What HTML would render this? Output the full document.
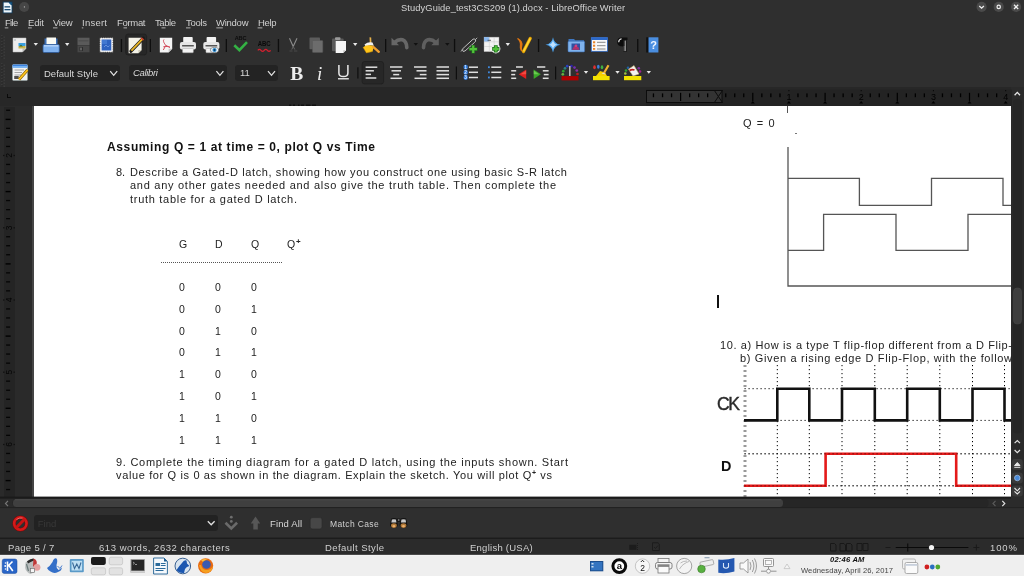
<!DOCTYPE html>
<html><head><meta charset="utf-8"><style>
html,body{margin:0;padding:0;width:1024px;height:576px;overflow:hidden;background:#2f2f2f;position:relative}
div,svg{box-sizing:border-box}
</style></head><body>
<div style="position:absolute;left:0px;top:0px;width:1024px;height:87px;background:#2f2f2f;"></div>
<div style="position:absolute;left:0px;top:87px;width:1024px;height:19px;background:#272727;"></div>
<div style="position:absolute;left:0px;top:106px;width:34px;height:392px;background:#2a2a2a;"></div>
<div style="position:absolute;left:3.5px;top:107px;width:11.5px;height:390px;background:#242424;"></div>
<div style="position:absolute;left:31.5px;top:106px;width:2.5px;height:391px;background:#444;"></div>
<div style="position:absolute;left:34px;top:106px;width:977px;height:391px;background:#ffffff;"></div>
<div style="position:absolute;left:1011px;top:87px;width:13px;height:411px;background:#2a2a2a;"></div>
<div style="position:absolute;left:0px;top:497px;width:1024px;height:11px;background:#2b2b2b;"></div>
<div style="position:absolute;left:0px;top:508px;width:1024px;height:30px;background:#2f2f2f;"></div>
<div style="position:absolute;left:0px;top:538px;width:1024px;height:17px;background:#2b2b2b;"></div>
<div style="position:absolute;left:0px;top:554px;width:1024px;height:1px;background:#202020;"></div>
<div style="position:absolute;left:0px;top:555px;width:1024px;height:21px;background:#efefef;"></div>
<div style="position:absolute;left:40px;top:65px;width:80px;height:16px;background:#232323;border-radius:3px"></div>
<div style="position:absolute;left:129px;top:65px;width:98px;height:16px;background:#232323;border-radius:3px"></div>
<div style="position:absolute;left:235px;top:65px;width:43px;height:16px;background:#232323;border-radius:3px"></div>
<div style="position:absolute;left:33.7px;top:515px;width:184.6px;height:16.4px;background:#222222;border-radius:3px"></div>
<div style="position:absolute;left:161px;top:262px;width:121px;height:0;border-top:1px dotted #555"></div>
<div style="position:absolute;left:787px;top:106px;width:1.3px;height:7px;background:#555;"></div>
<div style="position:absolute;left:795px;top:133px;width:1.5px;height:1px;background:#777;"></div>
<svg style="position:absolute;left:780px;top:140px;will-change:transform;" width="231" height="150" viewBox="0 0 231 150"><g fill="none" stroke="#555" stroke-width="1.3">
<path d="M8 7 V146 H231"/>
<path d="M8 38.3 H79.4 V65.3 H151.5 V38.3 H223 V65.3 H231"/>
<path d="M8 110.3 H43.6 V74.4 H116 V110.3 H188 V74.4 H231"/>
</g></svg>
<div style="position:absolute;left:717px;top:295px;width:2px;height:13px;background:#111;"></div>
<svg style="position:absolute;left:700px;top:365px;will-change:transform;" width="311" height="132" viewBox="0 0 311 132"><g stroke="#000" stroke-width="1" stroke-dasharray="1.2 2.8" fill="none"><path d="M77.3 0 V132"/><path d="M109.3 0 V132"/><path d="M142.0 0 V132"/><path d="M174.8 0 V132"/><path d="M207.2 0 V132"/><path d="M239.8 0 V132"/><path d="M272.5 0 V132"/><path d="M304.5 0 V132"/><path d="M44.5 23.7 H311"/><path d="M44.5 55.4 H311"/><path d="M44.5 88.8 H311"/><path d="M44.5 120.8 H311"/></g><path d="M45 0 V132" stroke="#999" stroke-width="3" stroke-dasharray="2 3" fill="none"/><path d="M44 55.4 H77.3 V23.7 H109.3 V55.4 H142.0 V23.7 H174.8 V55.4 H207.2 V23.7 H239.8 V55.4 H272.5 V23.7 H304.5 V55.4 H311" stroke="#111" stroke-width="2.6" fill="none"/><path d="M44 120.8 H125.6 V88.8 H256.2 V120.8 H311" stroke="#e41a1a" stroke-width="2.6" fill="none"/><g stroke="#000" stroke-width="1" stroke-dasharray="1.2 2.8" fill="none" opacity="0.6"><path d="M44.5 88.8 H311"/><path d="M44.5 120.8 H311"/></g></svg>
<svg style="position:absolute;left:645.6px;top:89px;will-change:transform;" width="366" height="17" viewBox="0 0 366 17"><rect x="0" y="0.6" width="366" height="16.4" fill="#232323"/><rect x="0.5" y="1.5" width="75.5" height="12" fill="#333" stroke="#0c0c0c" stroke-width="1"/><rect x="6.8" y="4.4" width="1.3" height="3.8" fill="#000"/><rect x="15.9" y="4.4" width="1.3" height="3.8" fill="#000"/><rect x="24.9" y="4.4" width="1.3" height="3.8" fill="#000"/><rect x="34.0" y="3.8" width="1.2" height="8.2" fill="#000"/><rect x="43.0" y="4.4" width="1.3" height="3.8" fill="#000"/><rect x="52.0" y="4.4" width="1.3" height="3.8" fill="#000"/><rect x="61.0" y="4.4" width="1.3" height="3.8" fill="#000"/><rect x="79.1" y="4.4" width="1.3" height="3.8" fill="#000"/><rect x="88.1" y="4.4" width="1.3" height="3.8" fill="#000"/><rect x="97.1" y="4.4" width="1.3" height="3.8" fill="#000"/><rect x="106.2" y="3.8" width="1.2" height="8.2" fill="#000"/><rect x="115.2" y="4.4" width="1.3" height="3.8" fill="#000"/><rect x="124.2" y="4.4" width="1.3" height="3.8" fill="#000"/><rect x="133.3" y="4.4" width="1.3" height="3.8" fill="#000"/><rect x="151.3" y="4.4" width="1.3" height="3.8" fill="#000"/><rect x="160.3" y="4.4" width="1.3" height="3.8" fill="#000"/><rect x="169.4" y="4.4" width="1.3" height="3.8" fill="#000"/><rect x="178.5" y="3.8" width="1.2" height="8.2" fill="#000"/><rect x="187.4" y="4.4" width="1.3" height="3.8" fill="#000"/><rect x="196.5" y="4.4" width="1.3" height="3.8" fill="#000"/><rect x="205.5" y="4.4" width="1.3" height="3.8" fill="#000"/><rect x="223.6" y="4.4" width="1.3" height="3.8" fill="#000"/><rect x="232.6" y="4.4" width="1.3" height="3.8" fill="#000"/><rect x="241.6" y="4.4" width="1.3" height="3.8" fill="#000"/><rect x="250.7" y="3.8" width="1.2" height="8.2" fill="#000"/><rect x="259.7" y="4.4" width="1.3" height="3.8" fill="#000"/><rect x="268.7" y="4.4" width="1.3" height="3.8" fill="#000"/><rect x="277.7" y="4.4" width="1.3" height="3.8" fill="#000"/><rect x="295.8" y="4.4" width="1.3" height="3.8" fill="#000"/><rect x="304.8" y="4.4" width="1.3" height="3.8" fill="#000"/><rect x="313.9" y="4.4" width="1.3" height="3.8" fill="#000"/><rect x="322.9" y="3.8" width="1.2" height="8.2" fill="#000"/><rect x="331.9" y="4.4" width="1.3" height="3.8" fill="#000"/><rect x="340.9" y="4.4" width="1.3" height="3.8" fill="#000"/><rect x="350.0" y="4.4" width="1.3" height="3.8" fill="#000"/><text x="142.9" y="10.8" font-family="Liberation Sans" font-size="9" fill="#000" text-anchor="middle">1</text><rect x="142.4" y="1.2" width="1" height="1" fill="#000"/><text x="215.2" y="10.8" font-family="Liberation Sans" font-size="9" fill="#000" text-anchor="middle">2</text><rect x="214.7" y="1.2" width="1" height="1" fill="#000"/><text x="287.4" y="10.8" font-family="Liberation Sans" font-size="9" fill="#000" text-anchor="middle">3</text><rect x="286.9" y="1.2" width="1" height="1" fill="#000"/><text x="359.7" y="10.8" font-family="Liberation Sans" font-size="9" fill="#000" text-anchor="middle">4</text><rect x="359.2" y="1.2" width="1" height="1" fill="#000"/><path d="M104.8 14.6 L106.8 12 L108.8 14.6 Z" fill="#000"/><path d="M140.9 14.6 L142.9 12 L144.9 14.6 Z" fill="#000"/><path d="M177.1 14.6 L179.1 12 L181.1 14.6 Z" fill="#000"/><path d="M213.2 14.6 L215.2 12 L217.2 14.6 Z" fill="#000"/><path d="M249.3 14.6 L251.3 12 L253.3 14.6 Z" fill="#000"/><path d="M285.4 14.6 L287.4 12 L289.4 14.6 Z" fill="#000"/><path d="M321.5 14.6 L323.5 12 L325.5 14.6 Z" fill="#000"/><path d="M357.7 14.6 L359.7 12 L361.7 14.6 Z" fill="#000"/><path d="M68.4 1.5 H76.4 L72.4 7.5 Z M68.4 13.5 H76.4 L72.4 7.5 Z" fill="#333" stroke="#0c0c0c" stroke-width="1"/></svg>
<div style="position:absolute;left:7px;top:94px;width:4px;height:4px;border-left:1.5px solid #0a0a0a;border-bottom:1.5px solid #0a0a0a"></div>
<svg style="position:absolute;left:3px;top:107px;will-change:transform;" width="12" height="390" viewBox="0 0 12 390"><rect x="3.1" y="2.6" width="4" height="1.3" fill="#050505"/><rect x="2.6" y="11.7" width="5" height="1.4" fill="#000"/><rect x="3.1" y="20.7" width="4" height="1.3" fill="#050505"/><rect x="3.1" y="29.7" width="4" height="1.3" fill="#050505"/><rect x="3.1" y="38.8" width="4" height="1.3" fill="#050505"/><rect x="3.1" y="56.8" width="4" height="1.3" fill="#050505"/><rect x="3.1" y="65.9" width="4" height="1.3" fill="#050505"/><rect x="3.1" y="74.9" width="4" height="1.3" fill="#050505"/><rect x="2.6" y="83.9" width="5" height="1.4" fill="#000"/><rect x="3.1" y="92.9" width="4" height="1.3" fill="#050505"/><rect x="3.1" y="102.0" width="4" height="1.3" fill="#050505"/><rect x="3.1" y="111.0" width="4" height="1.3" fill="#050505"/><rect x="3.1" y="129.1" width="4" height="1.3" fill="#050505"/><rect x="3.1" y="138.1" width="4" height="1.3" fill="#050505"/><rect x="3.1" y="147.1" width="4" height="1.3" fill="#050505"/><rect x="2.6" y="156.2" width="5" height="1.4" fill="#000"/><rect x="3.1" y="165.2" width="4" height="1.3" fill="#050505"/><rect x="3.1" y="174.2" width="4" height="1.3" fill="#050505"/><rect x="3.1" y="183.2" width="4" height="1.3" fill="#050505"/><rect x="3.1" y="201.3" width="4" height="1.3" fill="#050505"/><rect x="3.1" y="210.3" width="4" height="1.3" fill="#050505"/><rect x="3.1" y="219.4" width="4" height="1.3" fill="#050505"/><rect x="2.6" y="228.4" width="5" height="1.4" fill="#000"/><rect x="3.1" y="237.4" width="4" height="1.3" fill="#050505"/><rect x="3.1" y="246.4" width="4" height="1.3" fill="#050505"/><rect x="3.1" y="255.5" width="4" height="1.3" fill="#050505"/><rect x="3.1" y="273.5" width="4" height="1.3" fill="#050505"/><rect x="3.1" y="282.6" width="4" height="1.3" fill="#050505"/><rect x="3.1" y="291.6" width="4" height="1.3" fill="#050505"/><rect x="2.6" y="300.6" width="5" height="1.4" fill="#000"/><rect x="3.1" y="309.7" width="4" height="1.3" fill="#050505"/><rect x="3.1" y="318.7" width="4" height="1.3" fill="#050505"/><rect x="3.1" y="327.7" width="4" height="1.3" fill="#050505"/><rect x="3.1" y="345.8" width="4" height="1.3" fill="#050505"/><rect x="3.1" y="354.8" width="4" height="1.3" fill="#050505"/><rect x="3.1" y="363.8" width="4" height="1.3" fill="#050505"/><rect x="2.6" y="372.9" width="5" height="1.4" fill="#000"/><rect x="3.1" y="381.9" width="4" height="1.3" fill="#050505"/><text x="0" y="0" transform="translate(5.6,48.5) rotate(-90)" font-family="Liberation Sans" font-size="8.5" fill="#050505" text-anchor="middle" dy="3">2</text><rect x="0" y="47.9" width="1.5" height="1.2" fill="#111"/><rect x="10.5" y="47.9" width="1.5" height="1.2" fill="#111"/><text x="0" y="0" transform="translate(5.6,120.8) rotate(-90)" font-family="Liberation Sans" font-size="8.5" fill="#050505" text-anchor="middle" dy="3">3</text><rect x="0" y="120.2" width="1.5" height="1.2" fill="#111"/><rect x="10.5" y="120.2" width="1.5" height="1.2" fill="#111"/><text x="0" y="0" transform="translate(5.6,193.0) rotate(-90)" font-family="Liberation Sans" font-size="8.5" fill="#050505" text-anchor="middle" dy="3">4</text><rect x="0" y="192.4" width="1.5" height="1.2" fill="#111"/><rect x="10.5" y="192.4" width="1.5" height="1.2" fill="#111"/><text x="0" y="0" transform="translate(5.6,265.2) rotate(-90)" font-family="Liberation Sans" font-size="8.5" fill="#050505" text-anchor="middle" dy="3">5</text><rect x="0" y="264.6" width="1.5" height="1.2" fill="#111"/><rect x="10.5" y="264.6" width="1.5" height="1.2" fill="#111"/><text x="0" y="0" transform="translate(5.6,337.5) rotate(-90)" font-family="Liberation Sans" font-size="8.5" fill="#050505" text-anchor="middle" dy="3">6</text><rect x="0" y="336.9" width="1.5" height="1.2" fill="#111"/><rect x="10.5" y="336.9" width="1.5" height="1.2" fill="#111"/></svg>
<svg style="position:absolute;left:0px;top:0px;will-change:transform;" width="1024" height="576" viewBox="0 0 1024 576"><path d="M13 38 H26 V48.5 L22.5 52 H13 Z" fill="#ececec" stroke="#bdbdbd" stroke-width="0.5"/><path d="M22.5 52 V48.5 H26 Z" fill="#bbb"/><rect x="14.5" y="39.5" width="1" height="1" fill="#678"/><rect x="18.5" y="43" width="7" height="3" fill="#3aa0e0"/><rect x="18.5" y="46" width="7" height="2.5" fill="#c8b44a"/><path d="M19 46.5 L21 44.8 L23 46.5 Z" fill="#3a6a30"/><path d="M33.599999999999994 43.0 H38.0 L35.8 45.8 Z" fill="#e8e8e8"/><path d="M44.5 38.5 H57.5 V45 H44.5 Z" fill="#3d6fb5"/><rect x="46.5" y="37.5" width="9.5" height="7" fill="#fbfbf4"/><rect x="43" y="44.5" width="16.3" height="8" rx="1.2" fill="#80b2ef" stroke="#2c5898" stroke-width="0.8"/><rect x="44" y="45.2" width="14.3" height="1.3" fill="#b9d6fa"/><path d="M65.0 43.1 H69.4 L67.2 45.9 Z" fill="#e8e8e8"/><rect x="77.5" y="37.7" width="12" height="7.6" fill="#5a5a5a"/><rect x="78.5" y="40.3" width="10" height="1" fill="#4a4a4a"/><rect x="77.5" y="45.8" width="12" height="6.5" fill="#474747"/><rect x="79.5" y="47" width="3.5" height="4" fill="#2d2d2d"/><rect x="80.3" y="47.6" width="1.4" height="2.8" fill="#777"/><rect x="99.8" y="37.7" width="13.3" height="14.6" fill="#f4f4f4"/><path d="M99.8 37.7 h13.3 v14.6 h-13.3 z" fill="none" stroke="#2c2c2c" stroke-width="0.9" stroke-dasharray="1 1.2"/><rect x="101.6" y="39.5" width="9.7" height="11" fill="#2e62c0"/><rect x="102" y="40" width="5" height="4" fill="#4c82d8" opacity="0.7"/><path d="M104 47 l2-2 l2 2 l1.5-1.5" stroke="#8cb0ec" stroke-width="0.6" fill="none"/><rect x="120.80000000000001" y="39" width="1.3" height="13" fill="#0e0e0e"/><rect x="125.6" y="34" width="21" height="21" rx="2.5" fill="#272727" stroke="#1c1c1c" stroke-width="0.6"/><path d="M128.6 37.8 H141.6 V50 L138.4 53.2 H128.6 Z" fill="#f4f2e8"/><path d="M138.4 53.2 V50 H141.6 Z" fill="#cfcab5"/><path d="M131 51.2 L143.2 38.3" stroke="#1a1a1a" stroke-width="3.3" stroke-linecap="round"/><path d="M131.4 50.6 L142.8 38.7" stroke="#e9b526" stroke-width="1.9"/><path d="M141.8 37.3 L144.2 39.6 L143 40.7 L140.7 38.4 Z" fill="#c03a2a"/><rect x="149.70000000000002" y="39" width="1.3" height="13" fill="#0e0e0e"/><path d="M159.8 37.8 H172.2 V48.8 L168.6 52.4 H159.8 Z" fill="#f5f5f5"/><path d="M168.6 52.4 V48.8 H172.2 Z" fill="#c8c8c8"/><path d="M164 39.5 C162.5 41 164.5 43.5 165.8 45.5 L163.3 50 M165.8 45.5 L170 47.3 C168 46.3 166.5 46.3 163.3 46.8" stroke="#d24a5a" stroke-width="1" fill="none"/><rect x="183.20000000000002" y="37" width="9.5" height="5.5" rx="0.8" fill="#f2f2f2"/><rect x="179.9" y="42" width="16.1" height="7.6" rx="2" fill="#e6e6e6"/><rect x="182.1" y="45" width="11.7" height="1.5" fill="#555"/><rect x="182.5" y="48.5" width="10.9" height="4.3" rx="0.8" fill="#f4f4f4" stroke="#9a9a9a" stroke-width="0.4"/><rect x="206.60000000000002" y="37" width="9.5" height="5.5" rx="0.8" fill="#f2f2f2"/><rect x="203.3" y="42" width="16.1" height="7.6" rx="2" fill="#e6e6e6"/><rect x="205.5" y="45" width="11.7" height="1.5" fill="#555"/><rect x="205.9" y="48.5" width="10.9" height="4.3" rx="0.8" fill="#f4f4f4" stroke="#9a9a9a" stroke-width="0.4"/><ellipse cx="214.5" cy="50" rx="4.2" ry="2.6" fill="#e8f2fa" stroke="#444" stroke-width="0.5"/><circle cx="214.5" cy="50" r="2" fill="#2a8ad0"/><circle cx="214.5" cy="50" r="0.9" fill="#0c3a5a"/><rect x="225.70000000000002" y="39" width="1.3" height="13" fill="#0e0e0e"/><text x="240.6" y="40.2" font-family="Liberation Sans" font-weight="700" font-size="5.5" fill="#0c0c0c" text-anchor="middle">ABC</text><path d="M234.3 45.2 L239.4 50.2 L247 42.2" stroke="#34b244" stroke-width="2.6" fill="none" stroke-linejoin="miter"/><text x="264.2" y="46.4" font-family="Liberation Sans" font-weight="700" font-size="7" fill="#0a0a0a" text-anchor="middle" textLength="13" lengthAdjust="spacingAndGlyphs">ABC</text><path d="M257.8 50.3 q1.6 -2 3.2 0 t3.2 0 t3.2 0 t3.2 0" stroke="#d3202f" stroke-width="1.3" fill="none"/><rect x="277.79999999999995" y="39" width="1.3" height="13" fill="#0e0e0e"/><path d="M289.5 38.3 L293.2 46.5 M297 38.3 L293.2 46.5" stroke="#8c8c8c" stroke-width="1.1" fill="none"/><path d="M293.2 46.5 L291.8 49.5 M293.2 46.5 L294.8 49.5" stroke="#6a6a6a" stroke-width="0.9" fill="none"/><path d="M289.5 51 h3 M294 51 h3.3" stroke="#4a4a4a" stroke-width="1"/><rect x="309.5" y="37.6" width="10.5" height="11.6" rx="0.8" fill="#5c5c5c"/><rect x="312.4" y="40.5" width="10.4" height="12" rx="0.8" fill="#6c6c6c" stroke="#555" stroke-width="0.5"/><rect x="332" y="38.6" width="11.6" height="12.7" rx="1" fill="#5a5a5a"/><rect x="335" y="37.3" width="5.5" height="2.6" rx="1" fill="#9a9a9a"/><path d="M335.7 40.9 H346 V50.2 L343.3 52.9 H335.7 Z" fill="#f6f6f6"/><path d="M343.3 52.9 V50.2 H346 Z" fill="#c4c4c4"/><path d="M353.0 43.1 H357.4 L355.2 45.9 Z" fill="#e8e8e8"/><path d="M369.5 37.2 L371.2 37.6 L371.5 44 L369.8 44 Z" fill="#e8b24a"/><path d="M364.5 44.5 Q368.2 41.2 372.5 42.5 L373.8 45.8 Q369.5 44.3 365.8 47 Z" fill="#f0f0f0"/><path d="M363 47.3 L366 45.6 Q370 44.5 373.8 46 L372.6 51.5 L366.4 52.9 Z" fill="#ffc51a"/><path d="M363 47.3 L366.4 52.9 L372.6 51.5" stroke="#c98a00" stroke-width="0.5" fill="none"/><path d="M373.2 46.8 L378.8 51.8" stroke="#f0a030" stroke-width="2.4" stroke-linecap="round"/><rect x="385.0" y="39" width="1.3" height="13" fill="#0e0e0e"/><path d="M391.5 37.8 V45.3 H399 Z" fill="#676767"/><path d="M394.6 42.4 Q398.5 38.8 402.5 39.8 Q406.5 41 406.8 47.6" stroke="#676767" stroke-width="3.6" fill="none" stroke-linecap="round"/><path d="M413.6 43.0 H418.0 L415.8 45.8 Z" fill="#111"/><path d="M438.8 37.8 V45.3 H431.3 Z" fill="#5f5f5f"/><path d="M435.7 42.4 Q431.8 38.8 427.8 39.8 Q423.8 41 423.5 47.6" stroke="#5f5f5f" stroke-width="3.6" fill="none" stroke-linecap="round"/><path d="M445.1 43.0 H449.5 L447.3 45.8 Z" fill="#111"/><rect x="453.9" y="39" width="1.3" height="13" fill="#0e0e0e"/><path d="M463 48.5 L473 39.2 Q475 38.2 475.6 40 Q476 41.2 474.6 42.4 L465 51 Q462.5 52 462 50.3 Q461.8 49.3 463 48.5 Z" fill="none" stroke="#d0d0d0" stroke-width="0.9"/><path d="M461 51.5 L463 49.5 M475.5 39.5 L477.2 37.8" stroke="#d0d0d0" stroke-width="0.8"/><path d="M468.9 49.2 H477.5 M473.2 44.900000000000006 V53.5" stroke="#1e6a1e" stroke-width="3.8"/><path d="M469.5 49.2 H476.9 M473.2 45.50000000000001 V52.9" stroke="#52c13a" stroke-width="2.2"/><rect x="484" y="37.1" width="15" height="14.6" fill="#f3f3f3" stroke="#999" stroke-width="0.4"/><rect x="484" y="37.1" width="5.3" height="4.6" fill="#8ab8ee"/><path d="M484 41.8 H499 M484 46.5 H499 M489.3 37.1 V51.7 M494.2 37.1 V51.7" stroke="#c6c6c6" stroke-width="0.5"/><path d="M487.5 40.3 h3.5" stroke="#333" stroke-width="0.7"/><circle cx="495.8" cy="48.8" r="4.6" fill="#f0f0f0"/><path d="M492.2 48.8 H499.40000000000003 M495.8 45.199999999999996 V52.4" stroke="#1e6a1e" stroke-width="3.8"/><path d="M492.8 48.8 H498.8 M495.8 45.8 V51.8" stroke="#52c13a" stroke-width="2.2"/><path d="M505.6 43.1 H510.0 L507.8 45.9 Z" fill="#e8e8e8"/><path d="M518 38 Q523.5 41 522.3 46 Q521.2 50 523.5 52.2 Q519.2 51 519.8 46.2 Q520.6 41.5 517 38.8 Z" fill="#e07510"/><path d="M523.5 51.5 L530.3 38.3" stroke="#e2a000" stroke-width="3.2" stroke-linecap="round"/><path d="M523.5 51.5 L530.3 38.3" stroke="#ffd534" stroke-width="1.8"/><rect x="537.9" y="39" width="1.3" height="13" fill="#0e0e0e"/><path d="M553 37.2 Q554 43.8 560.5 44.8 Q554 45.8 553 52.4 Q552 45.8 545.5 44.8 Q552 43.8 553 37.2 Z" fill="#4ea6f2"/><path d="M553 40 Q553.6 44.2 557.5 44.8 Q553.6 45.4 553 49.5 Q552.4 45.4 548.5 44.8 Q552.4 44.2 553 40 Z" fill="#bfe2ff"/><path d="M568.5 39 H574 L575.2 40.3 H584 V51.9 H568.5 Z" fill="#3f78c2"/><rect x="568" y="41.2" width="16.6" height="10.7" rx="1" fill="#7fb2ec" stroke="#3a6cb0" stroke-width="0.6"/><rect x="571.5" y="43.5" width="8.5" height="6.5" fill="#3050a0"/><path d="M572 49.8 L575 45 L578.5 47.5 L579.5 49.8 Z" fill="#b0306a"/><circle cx="576" cy="45.8" r="1.3" fill="#d04080"/><rect x="591.3" y="37.6" width="16.1" height="13.7" fill="#f8f8f8" stroke="#2c68c8" stroke-width="0.8"/><rect x="591.3" y="37.6" width="16.1" height="2.4" fill="#2c68c8"/><rect x="593" y="41.3" width="2.2" height="2" fill="#e8842a"/><rect x="593" y="44.7" width="2.2" height="2" fill="#e8842a"/><rect x="593" y="48" width="2.2" height="1.8" fill="#e8842a"/><path d="M597 42.3 H605.5 M597 45.7 H605.5 M597 49 H605.5" stroke="#888" stroke-width="1"/><path d="M621.5 37.6 H627.5 V40 H626.5 V52 H623.6 V40 H623.2 V46.5 Q617.2 46.5 617.2 42 Q617.2 37.6 621.5 37.6 Z" fill="#0c0c0c"/><path d="M621.6 38.8 Q618.6 39.5 618.7 42.3" stroke="#e8e8e8" stroke-width="1.1" fill="none"/><path d="M625.2 40.5 V51.2" stroke="#d8d8d8" stroke-width="0.9"/><path d="M624.2 46 V51.2" stroke="#9a9a9a" stroke-width="0.6"/><rect x="637.1" y="39" width="1.3" height="13" fill="#0e0e0e"/><rect x="646.2" y="37.3" width="3.2" height="15.2" fill="#111"/><rect x="648.5" y="37.3" width="9.9" height="15.2" fill="#4a8ee0"/><text x="653.6" y="49" font-family="Liberation Sans" font-weight="700" font-size="11" fill="#f0f6ff" text-anchor="middle">?</text><rect x="12.5" y="64.5" width="15" height="16" rx="1" fill="#f2f2f2" stroke="#9aa" stroke-width="0.5"/><rect x="12.5" y="64.5" width="15" height="3.2" rx="1" fill="#3a82e0"/><rect x="12.5" y="66.2" width="15" height="1.5" fill="#88c0f8"/><path d="M14.5 70 H24 M14.5 72.5 H22 M14.5 75 H21" stroke="#9a9a9a" stroke-width="0.9"/><rect x="14.2" y="76" width="4.5" height="3" fill="#505050"/><path d="M19 79.5 L27.5 70" stroke="#8a6000" stroke-width="3"/><path d="M19 79.5 L27.5 70" stroke="#ffc61e" stroke-width="1.8"/><path d="M110.2 71.2 L113.7 75.3 L117.2 71.2" stroke="#e0e0e0" stroke-width="1.3" fill="none"/><path d="M216.4 71.2 L219.9 75.3 L223.4 71.2" stroke="#e0e0e0" stroke-width="1.3" fill="none"/><path d="M268 71.2 L271.5 75.3 L275 71.2" stroke="#e0e0e0" stroke-width="1.3" fill="none"/><text x="290.2" y="79.6" font-family="Liberation Serif" font-weight="700" font-size="19.5" fill="#ededed" textLength="13" lengthAdjust="spacingAndGlyphs">B</text><text x="317" y="79.8" font-family="Liberation Serif" font-style="italic" font-size="19" fill="#ededed">i</text><path d="M338.9 65 V73 Q338.9 76.6 343.4 76.6 Q347.9 76.6 347.9 73 V65" stroke="#e8e8e8" stroke-width="1.5" fill="none"/><rect x="338" y="78" width="10.8" height="1.5" fill="#d8d8d8"/><rect x="357.3" y="67.3" width="1.2" height="11.2" fill="#0e0e0e"/><rect x="362.1" y="61.5" width="21.5" height="22.5" rx="2.5" fill="#272727" stroke="#1c1c1c" stroke-width="0.6"/><rect x="365.6" y="66.45" width="11.699999999999989" height="1.5" fill="#e0e0e0"/><rect x="365.6" y="70.05" width="8.299999999999955" height="1.5" fill="#e0e0e0"/><rect x="365.6" y="73.65" width="5.399999999999977" height="1.5" fill="#e0e0e0"/><rect x="365.6" y="77.25" width="10.699999999999989" height="1.5" fill="#e0e0e0"/><rect x="390" y="66.25" width="12.399999999999977" height="1.5" fill="#e0e0e0"/><rect x="391.5" y="70.05" width="9.5" height="1.5" fill="#e0e0e0"/><rect x="393.2" y="73.85" width="6.0" height="1.5" fill="#e0e0e0"/><rect x="390.5" y="77.55" width="11.300000000000011" height="1.5" fill="#e0e0e0"/><rect x="414" y="66.25" width="12.5" height="1.5" fill="#e0e0e0"/><rect x="416.5" y="70.05" width="10.0" height="1.5" fill="#e0e0e0"/><rect x="419.8" y="73.85" width="6.699999999999989" height="1.5" fill="#e0e0e0"/><rect x="414.5" y="77.55" width="12.0" height="1.5" fill="#e0e0e0"/><rect x="436.5" y="66.25" width="12.5" height="1.5" fill="#e0e0e0"/><rect x="436.5" y="70.05" width="12.5" height="1.5" fill="#e0e0e0"/><rect x="436.5" y="73.85" width="12.5" height="1.5" fill="#e0e0e0"/><rect x="436.5" y="77.55" width="12.5" height="1.5" fill="#e0e0e0"/><rect x="455.8" y="66.5" width="1.2" height="13" fill="#0e0e0e"/><rect x="468.9" y="66.45" width="9.100000000000023" height="1.5" fill="#e0e0e0"/><rect x="468.9" y="71.55" width="9.100000000000023" height="1.5" fill="#e0e0e0"/><rect x="468.9" y="76.75" width="9.100000000000023" height="1.5" fill="#e0e0e0"/><rect x="463.6" y="64.8" width="4.2" height="4.8" rx="1.8" fill="#2f78d8"/><text x="465.7" y="68.8" font-family="Liberation Sans" font-weight="700" font-size="4.8" fill="#cfe4ff" text-anchor="middle">1</text><rect x="463.6" y="69.89999999999999" width="4.2" height="4.8" rx="1.8" fill="#2f78d8"/><text x="465.7" y="73.89999999999999" font-family="Liberation Sans" font-weight="700" font-size="4.8" fill="#cfe4ff" text-anchor="middle">2</text><rect x="463.6" y="75.1" width="4.2" height="4.8" rx="1.8" fill="#2f78d8"/><text x="465.7" y="79.1" font-family="Liberation Sans" font-weight="700" font-size="4.8" fill="#cfe4ff" text-anchor="middle">3</text><rect x="491.3" y="66.45" width="10.0" height="1.5" fill="#e0e0e0"/><rect x="491.3" y="71.55" width="10.0" height="1.5" fill="#e0e0e0"/><rect x="491.3" y="76.75" width="10.0" height="1.5" fill="#e0e0e0"/><rect x="488" y="66.3" width="1.8" height="1.8" fill="#3f8ae0"/><rect x="488" y="71.39999999999999" width="1.8" height="1.8" fill="#3f8ae0"/><rect x="488" y="76.6" width="1.8" height="1.8" fill="#3f8ae0"/><rect x="516" y="66.25" width="6.899999999999977" height="1.5" fill="#e0e0e0"/><rect x="511.2" y="70.05" width="5.000000000000057" height="1.5" fill="#e0e0e0"/><rect x="511.2" y="73.85" width="4.000000000000057" height="1.5" fill="#e0e0e0"/><rect x="511.2" y="77.55" width="5.000000000000057" height="1.5" fill="#e0e0e0"/><path d="M526.2 69.5 V79 L518.7 74.3 Z" fill="#e02020"/><path d="M526.2 70.5 V74.3 L520.5 74.3 Z" fill="#ff6a5a" opacity="0.6"/><rect x="537" y="66.25" width="8.299999999999955" height="1.5" fill="#e0e0e0"/><rect x="542.8" y="70.05" width="5.800000000000068" height="1.5" fill="#e0e0e0"/><rect x="543.8" y="73.85" width="4.800000000000068" height="1.5" fill="#e0e0e0"/><rect x="542.8" y="77.55" width="5.800000000000068" height="1.5" fill="#e0e0e0"/><path d="M533.7 69.5 V79 L540.8 74.3 Z" fill="#3aa828"/><path d="M533.7 70.5 V74.3 L539 74.3 Z" fill="#8ae06a" opacity="0.6"/><rect x="555" y="66.5" width="1.2" height="13" fill="#0e0e0e"/><rect x="561.5" y="76.1" width="17" height="4.3" fill="#b00000"/><circle cx="562.8" cy="74.3" r="1.35" fill="#6ab040"/><circle cx="563.3" cy="71.2" r="1.35" fill="#2ea030"/><circle cx="565" cy="68.3" r="1.35" fill="#2a8080"/><circle cx="567.2" cy="66.2" r="1.35" fill="#2a40c0"/><circle cx="571.5" cy="66.1" r="1.35" fill="#3020b0"/><circle cx="574.5" cy="67.6" r="1.35" fill="#7030b0"/><circle cx="576.8" cy="70.5" r="1.35" fill="#9030a0"/><circle cx="577.5" cy="74" r="1.35" fill="#c02020"/><rect x="569" y="66" width="1.6" height="10" fill="#bbb"/><path d="M583.8 70.9 H588.2 L586 73.7 Z" fill="#e8e8e8"/><rect x="593" y="76" width="16.6" height="4.2" fill="#f2e200"/><path d="M596 76 L600 71 L605 72.5 L607 76 Z" fill="#f6d000"/><ellipse cx="594.5" cy="67.3" rx="1.3" ry="2" fill="#e03030"/><ellipse cx="598.3" cy="66.7" rx="1.3" ry="2" fill="#3a80e0"/><ellipse cx="602" cy="67.3" rx="1.3" ry="2" fill="#40b040"/><path d="M601.5 73.5 L604.5 72 L605.5 74.5 Z" fill="#e0e0e0"/><path d="M604 73 L608.5 65.3" stroke="#f0b030" stroke-width="2.2"/><path d="M615.3 70.9 H619.7 L617.5 73.7 Z" fill="#e8e8e8"/><rect x="624" y="76" width="17.3" height="4.2" fill="#f2e200"/><circle cx="625.3" cy="73.5" r="1.3" fill="#a0c040"/><circle cx="626" cy="70.5" r="1.3" fill="#30a030"/><circle cx="628" cy="67.8" r="1.3" fill="#2060a0"/><circle cx="638.8" cy="68.3" r="1.3" fill="#8030a0"/><circle cx="640" cy="71.5" r="1.3" fill="#a02090"/><path d="M628.5 69.2 L634 65.5 L639 74 L633 76 Z" fill="#f2f2f2" stroke="#c8b070" stroke-width="0.6"/><path d="M629.5 70.5 Q632 69 634.5 70" stroke="#c01818" stroke-width="1.6" fill="none"/><path d="M646.5999999999999 70.9 H651.0 L648.8 73.7 Z" fill="#e8e8e8"/><rect x="2.7" y="1.6" width="9.8" height="11.7" fill="#0e3a5c"/><path d="M3.6 2.5 H8.6 L11.6 5.5 V12.4 H3.6 Z" fill="#eef6fb"/><path d="M8.6 2.5 H11.6 V5.5 Z" fill="#1b5f8e"/><rect x="4.5" y="6.2" width="5.6" height="1.3" fill="#1c4e74"/><rect x="4.5" y="9" width="6" height="1.3" fill="#1c4e74"/><circle cx="24.2" cy="7" r="5" fill="#464646"/><rect x="23.9" y="6" width="0.8" height="1.8" fill="#aaa"/><circle cx="981.6" cy="6.9" r="5.1" fill="#4a4a4a"/><circle cx="998.7" cy="6.9" r="5.1" fill="#4a4a4a"/><circle cx="1016.1" cy="6.9" r="5.1" fill="#4a4a4a"/><path d="M979.3 6 L981.6 8.2 L983.9 6" stroke="#f0f0f0" stroke-width="1.3" fill="none"/><circle cx="998.7" cy="6.9" r="1.7" fill="none" stroke="#f0f0f0" stroke-width="1.2"/><path d="M1014 4.8 L1018.2 9 M1018.2 4.8 L1014 9" stroke="#f0f0f0" stroke-width="1.3"/><rect x="4.8" y="27.5" width="3.5" height="0.8" fill="#cfcfcf"/><rect x="28" y="27.5" width="3.8" height="0.8" fill="#cfcfcf"/><rect x="53" y="27.5" width="4.5" height="0.8" fill="#cfcfcf"/><rect x="81.8" y="27.5" width="1.5" height="0.8" fill="#cfcfcf"/><rect x="123.5" y="27.5" width="3.5" height="0.8" fill="#cfcfcf"/><rect x="161.5" y="27.5" width="4" height="0.8" fill="#cfcfcf"/><rect x="186" y="27.5" width="4.5" height="0.8" fill="#cfcfcf"/><rect x="216.3" y="27.5" width="6.5" height="0.8" fill="#cfcfcf"/><rect x="257.6" y="27.5" width="4.8" height="0.8" fill="#cfcfcf"/><path d="M1014.6 95.2 L1017.3 92.4 L1020 95.2" stroke="#e8e8e8" stroke-width="1.3" fill="none"/><rect x="1013" y="99.2" width="9" height="334" rx="3.5" fill="#262626"/><rect x="1013.5" y="288" width="8" height="36" rx="3.5" fill="#3e3e3e" stroke="#4a4a4a" stroke-width="0.5"/><path d="M1014.6 443.2 L1017.3 440.5 L1020 443.2" stroke="#e0e0e0" stroke-width="1.2" fill="none"/><path d="M1014.6 450 L1017.3 452.7 L1020 450" stroke="#e0e0e0" stroke-width="1.2" fill="none"/><rect x="1011.8" y="459" width="11" height="11" rx="3" fill="#3a3a3a"/><path d="M1014.5 465.5 L1017.3 462.5 L1020 465.5 Z M1014.3 467.3 H1020.3" stroke="#e8e8e8" stroke-width="1" fill="#e8e8e8"/><rect x="1011.8" y="472.5" width="11" height="11" rx="3" fill="#3a3a3a"/><circle cx="1017.3" cy="478" r="2.8" fill="#4a8ad8" stroke="#b8d4f4" stroke-width="0.6"/><rect x="1011.8" y="485.5" width="11" height="11" rx="3" fill="#3a3a3a"/><path d="M1014.5 488 L1017.3 490.8 L1020 488 M1014.5 491.3 L1017.3 494 L1020 491.3" stroke="#e8e8e8" stroke-width="1.1" fill="none"/><rect x="0" y="496.6" width="1011" height="2" fill="#1a1a1a"/><path d="M8 500.8 L5.5 503.5 L8 506.2" stroke="#777" stroke-width="1.2" fill="none"/><rect x="12.5" y="498.8" width="976" height="8.4" rx="3.5" fill="#262626"/><rect x="13" y="499" width="770" height="8" rx="3.5" fill="#3f3f3f"/><rect x="15" y="499.3" width="766" height="1" fill="#4a4a4a"/><rect x="0" y="507.3" width="1024" height="0.8" fill="#202020"/><path d="M995.5 500.8 L993 503.5 L995.5 506.2" stroke="#5a5a5a" stroke-width="1.2" fill="none"/><path d="M1002.3 500.8 L1004.8 503.5 L1002.3 506.2" stroke="#e0e0e0" stroke-width="1.2" fill="none"/><circle cx="20.35" cy="523.5" r="6.2" fill="none" stroke="#7a0808" stroke-width="3.6"/><circle cx="20.35" cy="523.5" r="6.2" fill="none" stroke="#d41a1a" stroke-width="2.6"/><path d="M24.8 519 L15.9 528" stroke="#c81414" stroke-width="3"/><path d="M16.5 519.5 Q19 517.5 22.5 518" stroke="#f08080" stroke-width="1" fill="none" opacity="0.8"/><text x="37.8" y="527" font-family="Liberation Sans" font-size="9.5" fill="#383838">Find</text><path d="M207.8 521.2 L211.2 524.8 L214.6 521.2" stroke="#e0e0e0" stroke-width="1.3" fill="none"/><path d="M225.5 522.8 L231.3 528.5 L237.1 522.8" stroke="#6a6a6a" stroke-width="2.6" fill="none"/><circle cx="231.3" cy="517.2" r="1.4" fill="#6e6e6e"/><circle cx="231.3" cy="521.4" r="1.4" fill="#6e6e6e"/><path d="M250.8 523.5 L255.5 516.5 L260.2 523.5 H257.8 V529.5 H253.3 V523.5 Z" fill="#575757"/><rect x="310.2" y="517.6" width="11.8" height="11.4" rx="2.2" fill="#474747" stroke="#2a2a2a" stroke-width="0.6"/><path d="M391.29999999999995 518.5 Q393.9 517.3 396.5 518.5 L397.7 524 V526 Q393.9 529.8 390.09999999999997 526 V524 Z" fill="#101010"/><path d="M391.9 519.5 Q393.9 518.8 395.9 519.5 L396.5 522.5 H391.29999999999995 Z" fill="#c8c8c8"/><ellipse cx="393.9" cy="525.6" rx="2.9" ry="2.4" fill="#b07838"/><ellipse cx="393.9" cy="526.2" rx="1.5" ry="1.1" fill="#e8b070"/><path d="M400.9 518.5 Q403.5 517.3 406.1 518.5 L407.3 524 V526 Q403.5 529.8 399.7 526 V524 Z" fill="#101010"/><path d="M401.5 519.5 Q403.5 518.8 405.5 519.5 L406.1 522.5 H400.9 Z" fill="#c8c8c8"/><ellipse cx="403.5" cy="525.6" rx="2.9" ry="2.4" fill="#b07838"/><ellipse cx="403.5" cy="526.2" rx="1.5" ry="1.1" fill="#e8b070"/><rect x="397" y="518.5" width="3.3" height="3.5" fill="#161616"/><circle cx="398.7" cy="520" r="0.9" fill="#777"/><rect x="0" y="537.6" width="1024" height="1.2" fill="#1a1a1a"/><rect x="629.3" y="544.8" width="7.2" height="5" fill="#1c1c1c"/><path d="M637.5 543 V551" stroke="#1c1c1c" stroke-width="1" stroke-dasharray="1 1"/><path d="M652.5 542.8 H658 L659.3 544 V550.5 H652.5 Z" fill="none" stroke="#1c1c1c" stroke-width="1"/><path d="M654 547 L655.5 548.5 L658 545.5" stroke="#1c1c1c" stroke-width="0.9" fill="none"/><path d="M830.5 543.5 h4 l1.5 1.5 v6 h-5.5 z M840 543.5 h4 l1.5 1.5 v6 h-5.5 z M846.5 543.5 h4 l1.5 1.5 v6 h-5.5 z M857 543.5 h5 v7 h-5 z M863 543.5 h5 v7 h-5 z" fill="none" stroke="#181818" stroke-width="1"/><rect x="885.5" y="547" width="5" height="1" fill="#1a1a1a"/><rect x="895.7" y="547" width="72.7" height="1" fill="#0a0a0a"/><rect x="907.2" y="543.5" width="1.1" height="8" fill="#0a0a0a"/><circle cx="931.5" cy="547.5" r="2.6" fill="#f4f4f4"/><path d="M973.4 547.5 h6 M976.4 544.5 v6" stroke="#1a1a1a" stroke-width="1"/><path d="M289 105.2 h2.2 M293 105.2 h2 M298 105.2 h1.5 M301 105.2 h3 M306 105.2 h4.5 M312 105.2 h4" stroke="#111" stroke-width="1.6"/><rect x="1" y="35" width="1.5" height="1.5" fill="#3a3a3a"/><rect x="3.5" y="36.5" width="1.5" height="1.5" fill="#3a3a3a"/><rect x="1.5" y="36.2" width="1" height="1" fill="#222"/><rect x="1" y="38" width="1.5" height="1.5" fill="#3a3a3a"/><rect x="3.5" y="39.5" width="1.5" height="1.5" fill="#3a3a3a"/><rect x="1.5" y="39.2" width="1" height="1" fill="#222"/><rect x="1" y="41" width="1.5" height="1.5" fill="#3a3a3a"/><rect x="3.5" y="42.5" width="1.5" height="1.5" fill="#3a3a3a"/><rect x="1.5" y="42.2" width="1" height="1" fill="#222"/><rect x="1" y="44" width="1.5" height="1.5" fill="#3a3a3a"/><rect x="3.5" y="45.5" width="1.5" height="1.5" fill="#3a3a3a"/><rect x="1.5" y="45.2" width="1" height="1" fill="#222"/><rect x="1" y="47" width="1.5" height="1.5" fill="#3a3a3a"/><rect x="3.5" y="48.5" width="1.5" height="1.5" fill="#3a3a3a"/><rect x="1.5" y="48.2" width="1" height="1" fill="#222"/><rect x="1" y="50" width="1.5" height="1.5" fill="#3a3a3a"/><rect x="3.5" y="51.5" width="1.5" height="1.5" fill="#3a3a3a"/><rect x="1.5" y="51.2" width="1" height="1" fill="#222"/><rect x="1" y="53" width="1.5" height="1.5" fill="#3a3a3a"/><rect x="3.5" y="54.5" width="1.5" height="1.5" fill="#3a3a3a"/><rect x="1.5" y="54.2" width="1" height="1" fill="#222"/><rect x="1" y="56" width="1.5" height="1.5" fill="#3a3a3a"/><rect x="3.5" y="57.5" width="1.5" height="1.5" fill="#3a3a3a"/><rect x="1.5" y="57.2" width="1" height="1" fill="#222"/><rect x="1" y="63" width="1.5" height="1.5" fill="#3a3a3a"/><rect x="3.5" y="64.5" width="1.5" height="1.5" fill="#3a3a3a"/><rect x="1.5" y="64.2" width="1" height="1" fill="#222"/><rect x="1" y="66" width="1.5" height="1.5" fill="#3a3a3a"/><rect x="3.5" y="67.5" width="1.5" height="1.5" fill="#3a3a3a"/><rect x="1.5" y="67.2" width="1" height="1" fill="#222"/><rect x="1" y="69" width="1.5" height="1.5" fill="#3a3a3a"/><rect x="3.5" y="70.5" width="1.5" height="1.5" fill="#3a3a3a"/><rect x="1.5" y="70.2" width="1" height="1" fill="#222"/><rect x="1" y="72" width="1.5" height="1.5" fill="#3a3a3a"/><rect x="3.5" y="73.5" width="1.5" height="1.5" fill="#3a3a3a"/><rect x="1.5" y="73.2" width="1" height="1" fill="#222"/><rect x="1" y="75" width="1.5" height="1.5" fill="#3a3a3a"/><rect x="3.5" y="76.5" width="1.5" height="1.5" fill="#3a3a3a"/><rect x="1.5" y="76.2" width="1" height="1" fill="#222"/><rect x="1" y="78" width="1.5" height="1.5" fill="#3a3a3a"/><rect x="3.5" y="79.5" width="1.5" height="1.5" fill="#3a3a3a"/><rect x="1.5" y="79.2" width="1" height="1" fill="#222"/><rect x="1" y="81" width="1.5" height="1.5" fill="#3a3a3a"/><rect x="3.5" y="82.5" width="1.5" height="1.5" fill="#3a3a3a"/><rect x="1.5" y="82.2" width="1" height="1" fill="#222"/><rect x="1" y="84" width="1.5" height="1.5" fill="#3a3a3a"/><rect x="3.5" y="85.5" width="1.5" height="1.5" fill="#3a3a3a"/><rect x="1.5" y="85.2" width="1" height="1" fill="#222"/><rect x="0" y="554.8" width="1024" height="1" fill="#f4f4f4"/><rect x="2.2" y="559" width="14.8" height="14.4" rx="2" fill="#2a66c8" stroke="#1a4a9a" stroke-width="0.5"/><path d="M7.5 561.5 V571 M7.8 566.3 L12.5 561.5 M8.8 565.2 L12.8 571" stroke="#fff" stroke-width="1.6" fill="none"/><circle cx="5.2" cy="566" r="0.9" fill="#fff"/><circle cx="5.5" cy="563" r="0.8" fill="#fff"/><circle cx="5.5" cy="569" r="0.8" fill="#fff"/><path d="M25.5 562.5 Q29 559.5 33 558.6 L36 560 L35 572 L30.5 574 Q26 572 25.2 568 Z" fill="#b8bcbc"/><path d="M27 561.2 Q30.5 558.6 33.5 558.4 L34.5 560.2 Q31 561.5 28 563.5 Z" fill="#2a2a2a"/><path d="M33.5 558.6 Q37 560 36.8 563 L35.5 568 L33 566 Z" fill="#c03838"/><circle cx="37" cy="567.3" r="3.4" fill="#e4a0a0"/><rect x="30.5" y="568.5" width="4" height="4" fill="#f6f6f6" stroke="#666" stroke-width="0.6"/><path d="M26.5 564 L28.5 571" stroke="#6a7a7a" stroke-width="1.2"/><path d="M47 568 Q50 566 52.5 562 Q54 557.5 56.5 558.5 Q58 560 56.5 565 Q56 568 58.5 570 Q60.5 569 62 567.5 Q61.5 571 58 572 Q54 574 50.5 571.5 Q48 570 47 568 Z" fill="#3570c8"/><path d="M57.5 566 L60 568.5 L62 565.5" stroke="#3570c8" stroke-width="0.9" fill="none"/><rect x="69.8" y="559" width="14" height="13.3" rx="1" fill="#5a9ac8"/><rect x="71.5" y="560.8" width="10.6" height="9.7" fill="#bfe0f4"/><path d="M72.5 562.5 L74.5 568.5 L76.8 564 L79 568.5 L81 562.5" stroke="#3a6a98" stroke-width="1.1" fill="none"/><rect x="91" y="557" width="14.8" height="7.9" rx="1.8" fill="#1c1c1c"/><rect x="109.2" y="557.2" width="13.4" height="7.6" rx="1.8" fill="#e2e2e2" stroke="#bcbcbc" stroke-width="0.6"/><rect x="91.3" y="567.8" width="14.3" height="7" rx="1.8" fill="#e2e2e2" stroke="#bcbcbc" stroke-width="0.6"/><rect x="109.2" y="567.8" width="13.4" height="7" rx="1.8" fill="#e2e2e2" stroke="#bcbcbc" stroke-width="0.6"/><rect x="130.5" y="559" width="14.5" height="13.8" rx="0.8" fill="#9a9a9a"/><rect x="131.5" y="560" width="12.5" height="10.5" fill="#262626"/><rect x="130.5" y="571" width="14.5" height="1.8" fill="#d0d0d0"/><path d="M133 562 L134.5 563.2 L133 564.4" stroke="#ddd" stroke-width="0.6" fill="none"/><rect x="135" y="564" width="2" height="0.6" fill="#ddd"/><path d="M153.6 558 H164 L167.4 561.4 V574 H153.6 Z" fill="#f4f8fc" stroke="#1d5f92" stroke-width="0.9"/><path d="M164 558 L167.4 561.4 H164 Z" fill="#1d5f92"/><rect x="155.5" y="563" width="4.5" height="3" fill="#2a6a9a"/><rect x="160.8" y="563" width="4.8" height="1" fill="#2a6a9a"/><rect x="160.8" y="565" width="4.8" height="1" fill="#2a6a9a"/><rect x="155.5" y="568" width="10" height="1" fill="#2a6a9a"/><rect x="155.5" y="570" width="8" height="1" fill="#2a6a9a"/><circle cx="182.8" cy="566" r="7.8" fill="#d8e4f0" stroke="#3a6090" stroke-width="1"/><path d="M176.5 570 Q179 566 182 563 Q184 559.5 186.5 560.5 L187 563.5 L189.5 566 Q186.5 566.5 185 569 L184 573 Q179 573.5 176.5 570 Z" fill="#1a56b0"/><circle cx="205.6" cy="565.8" r="7.6" fill="#e86a10"/><circle cx="206.5" cy="564.5" r="4.3" fill="#3a5ab0"/><path d="M199 565 Q200 572 206 573 Q212 573 213 566 Q211 570 206 570 Q202 569.5 201 565 Z" fill="#f5a020"/><path d="M201 560 Q204 558.5 208 559.5 Q204 560 203 562 Z" fill="#f8c040"/><rect x="590" y="561" width="13.3" height="10.3" fill="#1d4e8c"/><rect x="591" y="562" width="11.3" height="8.3" fill="#3474c0"/><rect x="591.5" y="563" width="2" height="1.5" fill="#cde"/><rect x="591.5" y="566" width="2" height="1.5" fill="#cde"/><circle cx="619.3" cy="566.1" r="6.4" fill="#fff" stroke="#0a0a0a" stroke-width="3"/><text x="619.3" y="569.3" font-family="Liberation Sans" font-weight="700" font-size="9.5" fill="#0a0a0a" text-anchor="middle">a</text><circle cx="642.5" cy="566.1" r="7.2" fill="#f6f6f6" stroke="#b0b0b0" stroke-width="0.7"/><text x="642.5" y="571" font-family="Liberation Sans" font-size="8.5" fill="#111" text-anchor="middle">2</text><path d="M640.8 562 L642.5 560.3 L644.2 562" stroke="#111" stroke-width="0.9" fill="none"/><rect x="658" y="558.5" width="11" height="4" fill="#f4f4f4" stroke="#777" stroke-width="0.8"/><rect x="655.5" y="562.5" width="16.5" height="6.5" rx="2" fill="#f4f4f4" stroke="#777" stroke-width="0.9"/><rect x="658" y="566.5" width="11" height="6.5" fill="#fafafa" stroke="#777" stroke-width="0.8"/><rect x="657.5" y="564.5" width="12" height="1.2" fill="#555"/><circle cx="684.2" cy="566" r="7.6" fill="#f4f4f4" stroke="#9a9a9a" stroke-width="0.9"/><path d="M679.5 569 Q682 565 684 564 Q687 562 689 561.5 M680.5 563 Q683 561 687 561" stroke="#aaa" stroke-width="0.8" fill="none"/><rect x="700" y="561" width="13.5" height="5" rx="1" fill="#eee" stroke="#888" stroke-width="0.6" transform="rotate(-12 706 563)"/><circle cx="701.5" cy="569" r="3.8" fill="#58b040" stroke="#3a7a2a" stroke-width="0.6"/><rect x="704.5" y="557" width="5" height="1.3" fill="#9ab"/><path d="M718.3 559.5 Q726 560.5 734.4 558 V571.5 Q726 574 718.3 572.8 Z" fill="#2458b0"/><path d="M723.5 563 V567 Q726 569.5 728.5 567 V563" stroke="#d8e6f8" stroke-width="1.1" fill="none"/><path d="M740 563 H743.5 L748 559 V573 L743.5 569 H740 Z" fill="#fafafa" stroke="#888" stroke-width="0.8"/><path d="M750 562 Q752 566 750 570 M752.3 560 Q755.5 566 752.3 572 M754.5 558.5 Q758.5 566 754.5 573.5" stroke="#888" stroke-width="0.8" fill="none"/><rect x="763.5" y="558.5" width="10" height="8" rx="1" fill="#fafafa" stroke="#888" stroke-width="0.9"/><rect x="765.5" y="560.3" width="6" height="4.3" fill="none" stroke="#888" stroke-width="0.6"/><path d="M768.5 566.5 V570 M761 571.2 H766 M771 571.2 H776.5" stroke="#888" stroke-width="0.9"/><circle cx="768.5" cy="571.2" r="2" fill="#fafafa" stroke="#888" stroke-width="0.8"/><path d="M784 568.6 L787 564 L790 568.6 Z" fill="#f4f4f4" stroke="#bbb" stroke-width="0.7"/><rect x="902.5" y="559" width="13" height="10" rx="1.5" fill="#f0f0f0" stroke="#aaa" stroke-width="0.8"/><rect x="905" y="562.5" width="12.8" height="11" rx="1.5" fill="#fafafa" stroke="#999" stroke-width="0.8"/><rect x="905.5" y="564" width="11.8" height="1.8" fill="#c8d0dc"/><circle cx="926.9" cy="567" r="2.4" fill="#d02020"/><circle cx="932.3" cy="567" r="2.4" fill="#2a70c0"/><circle cx="937.8" cy="567" r="2.4" fill="#50a830"/></svg>
<div style="position:absolute;left:400.5px;top:3.83px;font-family:'Liberation Sans',sans-serif;font-size:9.3px;line-height:9.3px;font-weight:400;font-style:normal;color:#d4d4d4;letter-spacing:0.105px;white-space:pre;will-change:transform;">StudyGuide_test3CS209 (1).docx - LibreOffice Writer</div>
<div style="position:absolute;left:4.8px;top:17.96px;font-family:'Liberation Sans',sans-serif;font-size:9.5px;line-height:9.5px;font-weight:400;font-style:normal;color:#d0d0d0;letter-spacing:-0.704px;white-space:pre;will-change:transform;">File</div>
<div style="position:absolute;left:28px;top:17.96px;font-family:'Liberation Sans',sans-serif;font-size:9.5px;line-height:9.5px;font-weight:400;font-style:normal;color:#d0d0d0;letter-spacing:-0.192px;white-space:pre;will-change:transform;">Edit</div>
<div style="position:absolute;left:53px;top:17.96px;font-family:'Liberation Sans',sans-serif;font-size:9.5px;line-height:9.5px;font-weight:400;font-style:normal;color:#d0d0d0;letter-spacing:-0.307px;white-space:pre;will-change:transform;">View</div>
<div style="position:absolute;left:81.8px;top:17.96px;font-family:'Liberation Sans',sans-serif;font-size:9.5px;line-height:9.5px;font-weight:400;font-style:normal;color:#d0d0d0;letter-spacing:0.247px;white-space:pre;will-change:transform;">Insert</div>
<div style="position:absolute;left:116.5px;top:17.96px;font-family:'Liberation Sans',sans-serif;font-size:9.5px;line-height:9.5px;font-weight:400;font-style:normal;color:#d0d0d0;letter-spacing:-0.319px;white-space:pre;will-change:transform;">Format</div>
<div style="position:absolute;left:155.3px;top:17.96px;font-family:'Liberation Sans',sans-serif;font-size:9.5px;line-height:9.5px;font-weight:400;font-style:normal;color:#d0d0d0;letter-spacing:-0.430px;white-space:pre;will-change:transform;">Table</div>
<div style="position:absolute;left:186px;top:17.96px;font-family:'Liberation Sans',sans-serif;font-size:9.5px;line-height:9.5px;font-weight:400;font-style:normal;color:#d0d0d0;letter-spacing:-0.297px;white-space:pre;will-change:transform;">Tools</div>
<div style="position:absolute;left:216.3px;top:17.96px;font-family:'Liberation Sans',sans-serif;font-size:9.5px;line-height:9.5px;font-weight:400;font-style:normal;color:#d0d0d0;letter-spacing:-0.259px;white-space:pre;will-change:transform;">Window</div>
<div style="position:absolute;left:257.6px;top:17.96px;font-family:'Liberation Sans',sans-serif;font-size:9.5px;line-height:9.5px;font-weight:400;font-style:normal;color:#d0d0d0;letter-spacing:-0.349px;white-space:pre;will-change:transform;">Help</div>
<div style="position:absolute;left:43.8px;top:68.76px;font-family:'Liberation Sans',sans-serif;font-size:9.5px;line-height:9.5px;font-weight:400;font-style:normal;color:#d8d8d8;letter-spacing:0.010px;white-space:pre;will-change:transform;">Default Style</div>
<div style="position:absolute;left:132.8px;top:68.36px;font-family:'Liberation Sans',sans-serif;font-size:9.5px;line-height:9.5px;font-weight:400;font-style:italic;color:#d8d8d8;letter-spacing:-0.323px;white-space:pre;will-change:transform;">Calibri</div>
<div style="position:absolute;left:239.8px;top:68.36px;font-family:'Liberation Sans',sans-serif;font-size:9.5px;line-height:9.5px;font-weight:400;font-style:normal;color:#d8d8d8;letter-spacing:0.000px;white-space:pre;will-change:transform;">11</div>
<div style="position:absolute;left:106.6px;top:140.84px;font-family:'Liberation Sans',sans-serif;font-size:12px;line-height:12px;font-weight:700;font-style:normal;color:#111;letter-spacing:0.621px;white-space:pre;will-change:transform;">Assuming Q = 1 at time = 0, plot Q vs Time</div>
<div style="position:absolute;left:115.7px;top:166.69px;font-family:'Liberation Sans',sans-serif;font-size:11px;line-height:11px;font-weight:400;font-style:normal;color:#222;letter-spacing:-0.188px;white-space:pre;will-change:transform;">8.</div>
<div style="position:absolute;left:129.8px;top:166.69px;font-family:'Liberation Sans',sans-serif;font-size:11px;line-height:11px;font-weight:400;font-style:normal;color:#222;letter-spacing:0.625px;white-space:pre;will-change:transform;">Describe a Gated-D latch, showing how you construct one using basic S-R latch</div>
<div style="position:absolute;left:129.8px;top:180.39px;font-family:'Liberation Sans',sans-serif;font-size:11px;line-height:11px;font-weight:400;font-style:normal;color:#222;letter-spacing:0.727px;white-space:pre;will-change:transform;">and any other gates needed and also give the truth table. Then complete the</div>
<div style="position:absolute;left:129.8px;top:194.09px;font-family:'Liberation Sans',sans-serif;font-size:11px;line-height:11px;font-weight:400;font-style:normal;color:#222;letter-spacing:0.712px;white-space:pre;will-change:transform;">truth table for a gated D latch.</div>
<div style="position:absolute;left:115.5px;top:457.09px;font-family:'Liberation Sans',sans-serif;font-size:11px;line-height:11px;font-weight:400;font-style:normal;color:#222;letter-spacing:0.736px;white-space:pre;will-change:transform;">9. Complete the timing diagram for a gated D latch, using the inputs shown. Start</div>
<div style="position:absolute;left:115.5px;top:469.99px;font-family:'Liberation Sans',sans-serif;font-size:11px;line-height:11px;font-weight:400;font-style:normal;color:#222;letter-spacing:0.637px;white-space:pre;will-change:transform;">value for Q is 0 as shown in the diagram. Explain the sketch. You will plot Q<span style="font-size:7px;font-weight:700;position:relative;top:-4px">+</span> vs</div>
<div style="position:absolute;left:7.6px;top:542.66px;font-family:'Liberation Sans',sans-serif;font-size:9.5px;line-height:9.5px;font-weight:400;font-style:normal;color:#d0d0d0;letter-spacing:0.321px;white-space:pre;will-change:transform;">Page 5 / 7</div>
<div style="position:absolute;left:99px;top:542.66px;font-family:'Liberation Sans',sans-serif;font-size:9.5px;line-height:9.5px;font-weight:400;font-style:normal;color:#d0d0d0;letter-spacing:0.543px;white-space:pre;will-change:transform;">613 words, 2632 characters</div>
<div style="position:absolute;left:325.4px;top:542.66px;font-family:'Liberation Sans',sans-serif;font-size:9.5px;line-height:9.5px;font-weight:400;font-style:normal;color:#d0d0d0;letter-spacing:0.427px;white-space:pre;will-change:transform;">Default Style</div>
<div style="position:absolute;left:469.6px;top:542.66px;font-family:'Liberation Sans',sans-serif;font-size:9.5px;line-height:9.5px;font-weight:400;font-style:normal;color:#d0d0d0;letter-spacing:0.252px;white-space:pre;will-change:transform;">English (USA)</div>
<div style="position:absolute;left:990px;top:542.66px;font-family:'Liberation Sans',sans-serif;font-size:9.5px;line-height:9.5px;font-weight:400;font-style:normal;color:#d0d0d0;letter-spacing:0.896px;white-space:pre;will-change:transform;">100%</div>
<div style="position:absolute;left:270px;top:518.96px;font-family:'Liberation Sans',sans-serif;font-size:9.5px;line-height:9.5px;font-weight:400;font-style:normal;color:#d8d8d8;letter-spacing:0.121px;white-space:pre;will-change:transform;">Find All</div>
<div style="position:absolute;left:330px;top:519.80px;font-family:'Liberation Sans',sans-serif;font-size:8.5px;line-height:8.5px;font-weight:400;font-style:normal;color:#d0d0d0;letter-spacing:0.371px;white-space:pre;will-change:transform;">Match Case</div>
<div style="position:absolute;left:178.7px;top:238.71px;font-family:'Liberation Sans',sans-serif;font-size:10.5px;line-height:10.5px;font-weight:400;font-style:normal;color:#222;letter-spacing:0.000px;white-space:pre;will-change:transform;">G</div>
<div style="position:absolute;left:214.8px;top:238.71px;font-family:'Liberation Sans',sans-serif;font-size:10.5px;line-height:10.5px;font-weight:400;font-style:normal;color:#222;letter-spacing:0.000px;white-space:pre;will-change:transform;">D</div>
<div style="position:absolute;left:251px;top:238.71px;font-family:'Liberation Sans',sans-serif;font-size:10.5px;line-height:10.5px;font-weight:400;font-style:normal;color:#222;letter-spacing:0.000px;white-space:pre;will-change:transform;">Q</div>
<div style="position:absolute;left:286.8px;top:238.71px;font-family:'Liberation Sans',sans-serif;font-size:10.5px;line-height:10.5px;font-weight:400;font-style:normal;color:#222;letter-spacing:0.000px;white-space:pre;will-change:transform;">Q</div>
<div style="position:absolute;left:295.6px;top:238.23px;font-family:'Liberation Sans',sans-serif;font-size:8px;line-height:8px;font-weight:700;font-style:normal;color:#222;letter-spacing:0.000px;white-space:pre;will-change:transform;">+</div>
<div style="position:absolute;left:179px;top:281.91px;font-family:'Liberation Sans',sans-serif;font-size:10.5px;line-height:10.5px;font-weight:400;font-style:normal;color:#222;letter-spacing:0.000px;white-space:pre;will-change:transform;">0</div>
<div style="position:absolute;left:214.8px;top:281.91px;font-family:'Liberation Sans',sans-serif;font-size:10.5px;line-height:10.5px;font-weight:400;font-style:normal;color:#222;letter-spacing:0.000px;white-space:pre;will-change:transform;">0</div>
<div style="position:absolute;left:251px;top:281.91px;font-family:'Liberation Sans',sans-serif;font-size:10.5px;line-height:10.5px;font-weight:400;font-style:normal;color:#222;letter-spacing:0.000px;white-space:pre;will-change:transform;">0</div>
<div style="position:absolute;left:179px;top:303.61px;font-family:'Liberation Sans',sans-serif;font-size:10.5px;line-height:10.5px;font-weight:400;font-style:normal;color:#222;letter-spacing:0.000px;white-space:pre;will-change:transform;">0</div>
<div style="position:absolute;left:214.8px;top:303.61px;font-family:'Liberation Sans',sans-serif;font-size:10.5px;line-height:10.5px;font-weight:400;font-style:normal;color:#222;letter-spacing:0.000px;white-space:pre;will-change:transform;">0</div>
<div style="position:absolute;left:251px;top:303.61px;font-family:'Liberation Sans',sans-serif;font-size:10.5px;line-height:10.5px;font-weight:400;font-style:normal;color:#222;letter-spacing:0.000px;white-space:pre;will-change:transform;">1</div>
<div style="position:absolute;left:179px;top:325.61px;font-family:'Liberation Sans',sans-serif;font-size:10.5px;line-height:10.5px;font-weight:400;font-style:normal;color:#222;letter-spacing:0.000px;white-space:pre;will-change:transform;">0</div>
<div style="position:absolute;left:214.8px;top:325.61px;font-family:'Liberation Sans',sans-serif;font-size:10.5px;line-height:10.5px;font-weight:400;font-style:normal;color:#222;letter-spacing:0.000px;white-space:pre;will-change:transform;">1</div>
<div style="position:absolute;left:251px;top:325.61px;font-family:'Liberation Sans',sans-serif;font-size:10.5px;line-height:10.5px;font-weight:400;font-style:normal;color:#222;letter-spacing:0.000px;white-space:pre;will-change:transform;">0</div>
<div style="position:absolute;left:179px;top:347.41px;font-family:'Liberation Sans',sans-serif;font-size:10.5px;line-height:10.5px;font-weight:400;font-style:normal;color:#222;letter-spacing:0.000px;white-space:pre;will-change:transform;">0</div>
<div style="position:absolute;left:214.8px;top:347.41px;font-family:'Liberation Sans',sans-serif;font-size:10.5px;line-height:10.5px;font-weight:400;font-style:normal;color:#222;letter-spacing:0.000px;white-space:pre;will-change:transform;">1</div>
<div style="position:absolute;left:251px;top:347.41px;font-family:'Liberation Sans',sans-serif;font-size:10.5px;line-height:10.5px;font-weight:400;font-style:normal;color:#222;letter-spacing:0.000px;white-space:pre;will-change:transform;">1</div>
<div style="position:absolute;left:179px;top:368.91px;font-family:'Liberation Sans',sans-serif;font-size:10.5px;line-height:10.5px;font-weight:400;font-style:normal;color:#222;letter-spacing:0.000px;white-space:pre;will-change:transform;">1</div>
<div style="position:absolute;left:214.8px;top:368.91px;font-family:'Liberation Sans',sans-serif;font-size:10.5px;line-height:10.5px;font-weight:400;font-style:normal;color:#222;letter-spacing:0.000px;white-space:pre;will-change:transform;">0</div>
<div style="position:absolute;left:251px;top:368.91px;font-family:'Liberation Sans',sans-serif;font-size:10.5px;line-height:10.5px;font-weight:400;font-style:normal;color:#222;letter-spacing:0.000px;white-space:pre;will-change:transform;">0</div>
<div style="position:absolute;left:179px;top:391.01px;font-family:'Liberation Sans',sans-serif;font-size:10.5px;line-height:10.5px;font-weight:400;font-style:normal;color:#222;letter-spacing:0.000px;white-space:pre;will-change:transform;">1</div>
<div style="position:absolute;left:214.8px;top:391.01px;font-family:'Liberation Sans',sans-serif;font-size:10.5px;line-height:10.5px;font-weight:400;font-style:normal;color:#222;letter-spacing:0.000px;white-space:pre;will-change:transform;">0</div>
<div style="position:absolute;left:251px;top:391.01px;font-family:'Liberation Sans',sans-serif;font-size:10.5px;line-height:10.5px;font-weight:400;font-style:normal;color:#222;letter-spacing:0.000px;white-space:pre;will-change:transform;">1</div>
<div style="position:absolute;left:179px;top:412.51px;font-family:'Liberation Sans',sans-serif;font-size:10.5px;line-height:10.5px;font-weight:400;font-style:normal;color:#222;letter-spacing:0.000px;white-space:pre;will-change:transform;">1</div>
<div style="position:absolute;left:214.8px;top:412.51px;font-family:'Liberation Sans',sans-serif;font-size:10.5px;line-height:10.5px;font-weight:400;font-style:normal;color:#222;letter-spacing:0.000px;white-space:pre;will-change:transform;">1</div>
<div style="position:absolute;left:251px;top:412.51px;font-family:'Liberation Sans',sans-serif;font-size:10.5px;line-height:10.5px;font-weight:400;font-style:normal;color:#222;letter-spacing:0.000px;white-space:pre;will-change:transform;">0</div>
<div style="position:absolute;left:179px;top:434.61px;font-family:'Liberation Sans',sans-serif;font-size:10.5px;line-height:10.5px;font-weight:400;font-style:normal;color:#222;letter-spacing:0.000px;white-space:pre;will-change:transform;">1</div>
<div style="position:absolute;left:214.8px;top:434.61px;font-family:'Liberation Sans',sans-serif;font-size:10.5px;line-height:10.5px;font-weight:400;font-style:normal;color:#222;letter-spacing:0.000px;white-space:pre;will-change:transform;">1</div>
<div style="position:absolute;left:251px;top:434.61px;font-family:'Liberation Sans',sans-serif;font-size:10.5px;line-height:10.5px;font-weight:400;font-style:normal;color:#222;letter-spacing:0.000px;white-space:pre;will-change:transform;">1</div>
<div style="position:absolute;left:743.3px;top:117.59px;font-family:'Liberation Sans',sans-serif;font-size:11px;line-height:11px;font-weight:400;font-style:normal;color:#222;letter-spacing:1.120px;white-space:pre;will-change:transform;">Q = 0</div>
<div style="position:absolute;left:719.8px;top:340.49px;font-family:'Liberation Sans',sans-serif;font-size:11px;line-height:11px;font-weight:400;font-style:normal;color:#222;letter-spacing:0.618px;white-space:pre;will-change:transform;">10. a) How is a type T flip-flop different from a D Flip-</div>
<div style="position:absolute;left:739.7px;top:352.99px;font-family:'Liberation Sans',sans-serif;font-size:11px;line-height:11px;font-weight:400;font-style:normal;color:#222;letter-spacing:0.647px;white-space:pre;will-change:transform;">b) Given a rising edge D Flip-Flop, with the follow</div>
<div style="position:absolute;left:716.8px;top:396.10px;font-family:'Liberation Sans',sans-serif;font-size:17.6px;line-height:17.6px;font-weight:400;font-style:normal;color:#2a2a2a;letter-spacing:-1.453px;white-space:pre;will-change:transform;-webkit-text-stroke:0.4px #2a2a2a;">CK</div>
<div style="position:absolute;left:721.4px;top:459.06px;font-family:'Liberation Sans',sans-serif;font-size:14.4px;line-height:14.4px;font-weight:700;font-style:normal;color:#111;letter-spacing:0.000px;white-space:pre;will-change:transform;">D</div>
<div style="position:absolute;left:830px;top:556.27px;font-family:'Liberation Sans',sans-serif;font-size:7.6px;line-height:7.6px;font-weight:700;font-style:italic;color:#111;letter-spacing:0.191px;white-space:pre;will-change:transform;">02:46 AM</div>
<div style="position:absolute;left:801px;top:566.87px;font-family:'Liberation Sans',sans-serif;font-size:7.6px;line-height:7.6px;font-weight:400;font-style:normal;color:#444;letter-spacing:0.081px;white-space:pre;will-change:transform;">Wednesday, April 26, 2017</div>
</body></html>
